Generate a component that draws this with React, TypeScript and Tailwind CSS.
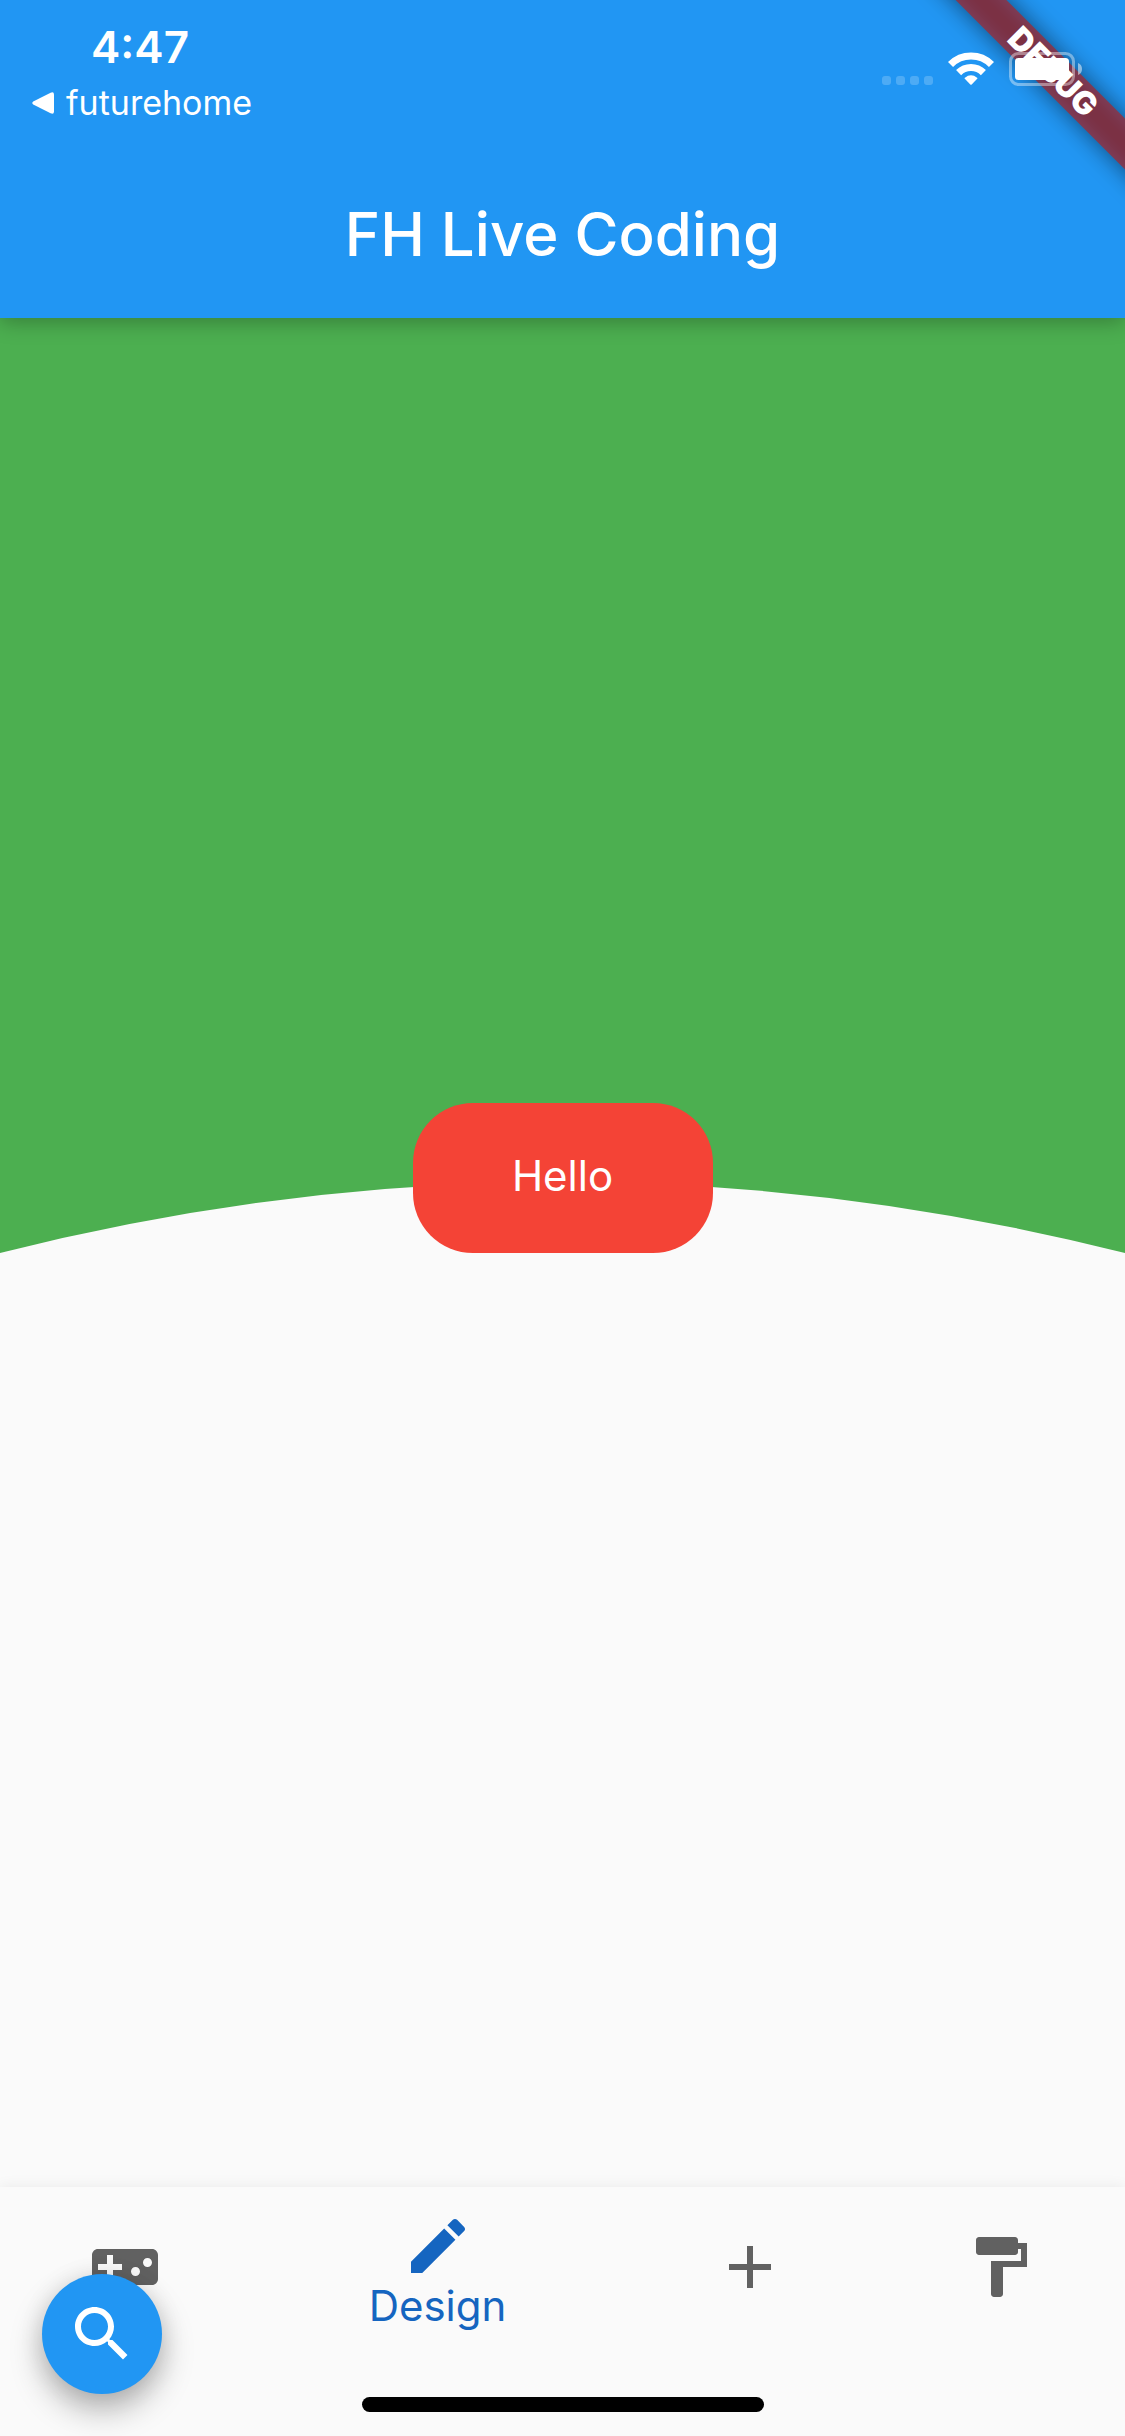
import React from "react";

function MaterialIcon({ path }: { path: string }) {
  return (
    <svg viewBox="0 0 24 24" className="size-18 fill-current" aria-hidden="true">
      <path d={path} />
    </svg>
  );
}

const icons = {
  game: "M21 6H3c-1.1 0-2 .9-2 2v8c0 1.1.9 2 2 2h18c1.1 0 2-.9 2-2V8c0-1.1-.9-2-2-2zm-10 7H8v3H6v-3H3v-2h3V8h2v3h3v2zm4.5 2c-.83 0-1.5-.67-1.5-1.5s.67-1.5 1.5-1.5 1.5.67 1.5 1.5-.67 1.5-1.5 1.5zm4-3c-.83 0-1.5-.67-1.5-1.5S18.67 9 19.5 9s1.5.67 1.5 1.5-.67 1.5-1.5 1.5z",
  pencil:
    "M3 17.25V21h3.75L17.81 9.94l-3.75-3.75L3 17.25zM20.71 7.04c.39-.39.39-1.02 0-1.41l-2.34-2.34c-.39-.39-1.02-.39-1.41 0l-1.83 1.83 3.75 3.75 1.83-1.83z",
  add: "M19 13h-6v6h-2v-6H5v-2h6V5h2v6h6v2z",
  roller:
    "M18 4V3c0-.55-.45-1-1-1H5c-.55 0-1 .45-1 1v4c0 .55.45 1 1 1h12c.55 0 1-.45 1-1V6h1v4H9v11c0 .55.45 1 1 1h2c.55 0 1-.45 1-1v-9h8V4h-3z",
  search:
    "M15.5 14h-.79l-.28-.27C15.41 12.59 16 11.11 16 9.5 16 5.91 13.09 3 9.5 3S3 5.91 3 9.5 5.91 16 9.5 16c1.61 0 3.09-.59 4.23-1.57l.27.28v.79l5 4.99L20.49 19l-4.99-5zm-6 0C7.01 14 5 11.99 5 9.5S7.01 5 9.5 5 14 7.01 14 9.5 11.99 14 9.5 14z",
};

function DebugRibbon() {
  return (
    <div className="pointer-events-none absolute top-0 right-0 size-60 overflow-hidden">
      <div className="absolute top-[54px] -right-[108px] h-9 w-90 rotate-45">
        <div className="absolute inset-0 bg-black/50 blur-[12px]" />
        <div className="absolute inset-0 flex items-center justify-center bg-[#b71c1c]/63 text-[32px] leading-9 font-black text-white">
          DEBUG
        </div>
      </div>
    </div>
  );
}

function StatusBar() {
  return (
    <div className="flex h-[150px] justify-between pr-[43px] pl-8 text-white">
      <div className="flex flex-col items-start">
        <time className="mt-5 ml-[59px] text-[44px] leading-[54px] font-semibold">4:47</time>
        <a href="#futurehome" className="mt-[5px] flex items-center gap-3 text-[34px] leading-12">
          <svg viewBox="0 0 22 22" className="size-[22px] fill-current" aria-hidden="true">
            <path d="M1.2 9.4 18.6.8Q22-.6 22 2.6v16.8q0 3.200-3.400 1.800L1.200 12.600Q-.6 11 1.200 9.400Z" />
          </svg>
          futurehome
        </a>
      </div>
      <div className="relative z-10 flex h-[86px] items-end">
        <div className="mb-px flex gap-[5px]">
          <span className="size-[9px] rounded-[3px] bg-white/20" />
          <span className="size-[9px] rounded-[3px] bg-white/20" />
          <span className="size-[9px] rounded-[3px] bg-white/20" />
          <span className="size-[9px] rounded-[3px] bg-white/20" />
        </div>
        <svg viewBox="0 0 46 33" className="mb-px ml-[15px] h-[33px] w-[46px]" role="img" aria-label="Wi-Fi">
          <g fill="none" stroke="#fff" strokeWidth="7.200">
            <path d="M2.500 12.500A29 29 0 0 1 43.500 12.500" />
            <path d="M10.600 20.600A17.600 17.600 0 0 1 35.400 20.600" />
          </g>
          <path fill="#fff" d="M16.800 26.800q-.5-.6.100-1.100Q23 21 29.100 25.700q.6.500.100 1.100l-5.500 5.700q-.7.600-1.400 0Z" />
        </svg>
        <svg viewBox="0 0 73 34" className="ml-[15px] h-[34px] w-[73px]" role="img" aria-label="Battery full">
          <rect x="1.500" y="1.500" width="63" height="31" rx="8" fill="none" stroke="#fff" strokeOpacity=".4" strokeWidth="3" />
          <rect x="6" y="6" width="54" height="22" rx="3.500" fill="#fff" />
          <path d="M69 11q4 1.500 4 6t-4 6Z" fill="#fff" fillOpacity=".5" />
        </svg>
      </div>
    </div>
  );
}

function NavButton({ label, path }: { label: string; path: string }) {
  return (
    <button type="button" aria-label={label} className="flex flex-2 justify-center pt-11 text-[#616161]">
      <MaterialIcon path={path} />
    </button>
  );
}

export default function App() {
  return (
    <div className="relative flex min-h-screen flex-col bg-[#fafafa] font-['Inter',sans-serif]">
      <header className="relative z-10 bg-[#2196f3] shadow-[0_4px_20px_rgba(0,0,0,0.28)]">
        <DebugRibbon />
        <StatusBar />
        <h1 className="flex h-42 items-center justify-center text-[60px] leading-18 font-medium text-white">
          FH Live Coding
        </h1>
      </header>

      <main className="grid flex-1 grid-rows-2">
        <section className="relative flex items-end justify-center bg-[#4caf50]">
          <svg
            viewBox="0 0 1125 71"
            preserveAspectRatio="none"
            className="absolute bottom-0 left-0 h-[71px] w-full"
            aria-hidden="true"
          >
            <path d="M0 71Q562.500-71 1125 71Z" fill="#fafafa" />
          </svg>
          <button
            type="button"
            className="relative h-[150px] w-[300px] rounded-[60px] bg-[#f44336] pb-1 text-[42px] leading-12 text-white"
          >
            Hello
          </button>
        </section>
      </main>

      <nav className="relative bg-[#fafafa] shadow-[0_0_14px_rgba(0,0,0,0.07)]">
        <div className="flex h-[249px] items-stretch">
          <NavButton label="Games" path={icons.game} />
          <button
            type="button"
            aria-current="page"
            className="flex flex-3 flex-col items-center pt-[23px] text-[42px] leading-12 text-[#1565c0]"
          >
            <MaterialIcon path={icons.pencil} />
            Design
          </button>
          <NavButton label="Add" path={icons.add} />
          <NavButton label="Paint" path={icons.roller} />
        </div>
        <div className="absolute inset-x-0 bottom-6 flex justify-center">
          <div className="h-[15px] w-[402px] rounded-full bg-black" />
        </div>
        <button
          type="button"
          aria-label="Search"
          className="absolute bottom-[42px] left-[42px] flex size-30 items-center justify-center rounded-full bg-[#2196f3] text-white shadow-[0_16px_32px_rgba(0,0,0,0.28),0_2px_24px_rgba(0,0,0,0.1)]"
        >
          <MaterialIcon path={icons.search} />
        </button>
      </nav>
    </div>
  );
}
